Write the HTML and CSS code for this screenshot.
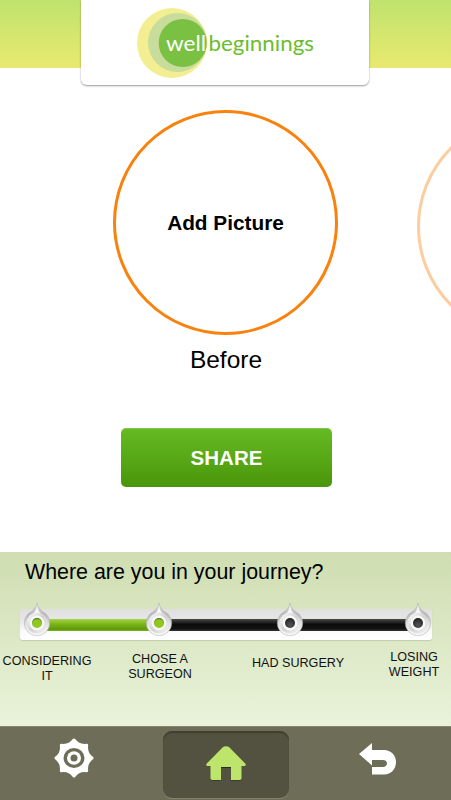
FILE: index.html
```html
<!DOCTYPE html>
<html lang="en">
<head>
<meta charset="utf-8">
<title>Well Beginnings</title>
<link rel="stylesheet" href="styles.css">
</head>
<body>
<div class="app">
  <svg class="defs" width="0" height="0" aria-hidden="true">
    <defs>
      <linearGradient id="knobBody" x1="0" y1="0" x2="0" y2="1">
        <stop offset="0" stop-color="#e8e8e8"/>
        <stop offset="0.35" stop-color="#b8b8b8"/>
        <stop offset="0.7" stop-color="#e8e8e8"/>
        <stop offset="1" stop-color="#fcfcfc"/>
      </linearGradient>
      <linearGradient id="knobFace" x1="0" y1="0" x2="1" y2="1">
        <stop offset="0" stop-color="#fdfdfd"/>
        <stop offset="0.5" stop-color="#d2d2d2"/>
        <stop offset="1" stop-color="#f6f6f6"/>
      </linearGradient>
      <symbol id="knob" viewBox="0 0 28 34">
        <path d="M14 1 C14.500 5 17 8 23 12 A12.700 12.700 0 1 1 5 12 C11 8 13.500 5 14 1 Z" fill="url(#knobBody)" stroke="#a8a8a8" stroke-width=".5"/>
        <path d="M14 3 C14.400 7 15.500 9.500 18 11.500 L14 14 L10 11.500 C12.500 9.500 13.600 7 14 3 Z" fill="#f8f8f8"/>
        <circle cx="14" cy="21" r="10.500" fill="url(#knobFace)"/>
        <circle cx="14" cy="21" r="7.500" fill="#f7f7f7"/>
      </symbol>
    </defs>
  </svg>

  <header class="top">
    <div class="logo-card">
      <svg class="logo" width="288" height="85" viewBox="81 0 288 85" role="img" aria-label="well beginnings">
        <circle cx="172" cy="43" r="35" fill="#f3ee91"/>
        <circle cx="177.500" cy="42.500" r="29.500" fill="#c8dd9c"/>
        <circle cx="182.700" cy="43" r="24" fill="#7ac143"/>
        <text class="logo-well" x="166" y="50.500" textLength="40" lengthAdjust="spacingAndGlyphs">well</text>
        <text class="logo-begin" x="208.500" y="50.500" textLength="105.500" lengthAdjust="spacingAndGlyphs">beginnings</text>
      </svg>
    </div>
  </header>

  <main class="main">
    <div class="carousel">
      <section class="slide">
        <div class="photo"><span class="photo-label">Add Picture</span></div>
        <div class="slide-caption">Before</div>
      </section>
      <section class="slide slide-faded">
        <div class="photo"></div>
      </section>
    </div>
    <button class="share" type="button">SHARE</button>
  </main>

  <section class="journey">
    <h2 class="journey-title">Where are you in your journey?</h2>
    <div class="track">
      <div class="bar"><div class="bar-done"></div></div>
      <span class="knob knob-1"><svg width="28" height="34"><use href="#knob"/></svg><i class="dot dot-on"></i></span>
      <span class="knob knob-2"><svg width="28" height="34"><use href="#knob"/></svg><i class="dot dot-on"></i></span>
      <span class="knob knob-3"><svg width="28" height="34"><use href="#knob"/></svg><i class="dot"></i></span>
      <span class="knob knob-4"><svg width="28" height="34"><use href="#knob"/></svg><i class="dot"></i></span>
    </div>
    <div class="stages">
      <div class="stage stage-1">CONSIDERING<br>IT</div>
      <div class="stage stage-2">CHOSE A<br>SURGEON</div>
      <div class="stage stage-3">HAD SURGERY</div>
      <div class="stage stage-4">LOSING<br>WEIGHT</div>
    </div>
  </section>

  <nav class="nav">
    <button class="nav-btn nav-gear" type="button" aria-label="Settings">
      <svg width="42" height="38" viewBox="0 0 42 38">
        <path fill="#fff" stroke="#fff" stroke-width="3" stroke-linejoin="round" d="M21 1 Q25.800 7.500 33.700 6.300 Q32.500 14.200 39 19 Q32.500 23.800 33.700 31.700 Q25.800 30.500 21 37 Q16.200 30.500 8.300 31.700 Q9.500 23.800 3 19 Q9.500 14.200 8.300 6.300 Q16.200 7.500 21 1 Z"/>
        <ellipse cx="21" cy="19" rx="10.500" ry="10" fill="#6e6d58"/>
        <ellipse cx="21" cy="19" rx="7" ry="6.700" fill="#fff"/>
        <circle cx="21" cy="19" r="3.500" fill="#6e6d58"/>
      </svg>
    </button>
    <button class="nav-btn nav-home" type="button" aria-label="Home">
      <svg width="40" height="35" viewBox="0 0 40 35">
        <path fill="#2c2b20" d="M14 20 H26 V22 H14 Z"/>
        <path fill="#3c3b2c" d="M5 33 C5 34.500 6 35 7 35 H14 V34 H5 Z M25 34 H35 C35 34.500 34 35 33 35 H25 Z"/>
        <path fill="#bde56b" d="M16.500 1.500 C18.500 -.3 21.500 -.3 23.500 1.500 L39.200 17.500 C40.400 18.800 39.600 20 38 20 L35.500 20 L35.500 32 C35.500 33.200 34.500 34 33.500 34 L25 34 L25 21 L15 21 L15 34 L6.500 34 C5.500 34 4.500 33.200 4.500 32 L4.500 20 L2 20 C.4 20 -.4 18.800 .8 17.500 Z"/>
      </svg>
    </button>
    <button class="nav-btn nav-back" type="button" aria-label="Back">
      <svg width="37" height="32" viewBox="0 0 37 32">
        <path fill="#fff" d="M0 11 L13 0 L13 7 L25 7 C32 7 37 12 37 19 C37 26 32 31.500 25 31.500 L13 31.500 L13 24 L24 24 C26.500 24 28 22 28 20.500 C28 18.500 26.500 17 24 17 L13 17 L13 22.500 Z"/>
      </svg>
    </button>
  </nav>
</div>
</body>
</html>
```
FILE: styles.css
```css
* { box-sizing: border-box; }
html, body { margin: 0; padding: 0; }
body {
  width: 451px;
  height: 800px;
  overflow: hidden;
  background: #fff;
  font-family: "Liberation Sans", Arial, sans-serif;
  color: #000;
}
.app {
  width: 451px;
  height: 800px;
  display: flex;
  flex-direction: column;
  overflow: hidden;
}
.defs { position: absolute; }

/* Header */
.top {
  height: 68px;
  flex: none;
  background: linear-gradient(#bfe36d, #e9e96f);
  display: flex;
  justify-content: center;
  padding-right: 1px;
}
.logo-card {
  width: 288px;
  height: 85px;
  flex: none;
  background: #fff;
  border-radius: 0 0 6px 6px;
  box-shadow: 0 1px 2px rgba(0, 0, 0, .4);
}
.logo { display: block; }
.logo-well, .logo-begin {
  font-family: Lato, "Open Sans", sans-serif;
  font-size: 21px;
  font-weight: 400;
}
.logo-well { fill: #fff; }
.logo-begin { fill: #6cbc2d; }

/* Main */
.main {
  flex: 1;
  min-height: 0;
  display: flex;
  flex-direction: column;
  align-items: center;
  padding-top: 42px;
}
.carousel {
  width: 451px;
  display: flex;
  gap: 79px;
  padding-left: 113px;
  overflow: hidden;
  align-items: flex-start;
}
.slide {
  flex: none;
  width: 225px;
  display: flex;
  flex-direction: column;
  align-items: center;
}
.slide-faded { opacity: .4; padding-top: 4px; }
.photo {
  width: 225px;
  height: 225px;
  border: 3px solid #f9820f;
  border-radius: 50%;
  display: flex;
  align-items: center;
  justify-content: center;
  padding-top: 1px;
}
.photo-label { font-size: 20.800px; font-weight: 700; }
.slide-caption { font-size: 24.500px; line-height: 28px; margin-top: 11px; padding-left: 1px; }
.share {
  width: 211px;
  height: 59px;
  margin-top: 54px;
  margin-left: 2px;
  border: 0;
  border-radius: 5px;
  background: linear-gradient(#65bb23, #4a960a);
  color: #fff;
  font-family: inherit;
  font-size: 20.500px;
  font-weight: 700;
  box-shadow: inset 0 1px 0 rgba(255, 255, 255, .2);
}

/* Journey */
.journey {
  height: 174px;
  flex: none;
  background: linear-gradient(#cfddb1, #e9f3da);
  padding-top: 8px;
}
.journey-title {
  margin: 0 0 0 25px;
  font-size: 21.400px;
  line-height: 24px;
  font-weight: 400;
}
.track {
  position: relative;
  width: 412px;
  height: 31px;
  margin: 25px 0 0 20px;
  border-radius: 3px;
  background: linear-gradient(#e0e0e0 0, #e6e6e6 35%, #fafafa 70%, #fff 100%);
  box-shadow: 0 1px 1px rgba(0, 0, 0, .12);
}
.bar {
  position: absolute;
  left: 17px;
  right: 14px;
  top: 10px;
  height: 12px;
  background: linear-gradient(#4a4a4a, #0c0c0c 45%, #111 80%, #333);
}
.bar-done {
  width: 122px;
  height: 100%;
  background: linear-gradient(#a6d44a, #7db61a 40%, #5d9a08 85%, #7fae2e);
}
.knob {
  position: absolute;
  top: -7px;
  width: 28px;
  height: 34px;
}
.knob svg { display: block; }
.knob-1 { left: 3px; }
.knob-2 { left: 125px; }
.knob-3 { left: 256px; }
.knob-4 { left: 384px; }
.dot {
  position: absolute;
  left: 9px;
  top: 16px;
  width: 10px;
  height: 10px;
  border-radius: 50%;
  background: radial-gradient(circle at 50% 70%, #555, #141414);
}
.dot-on {
  background: radial-gradient(circle at 50% 60%, #8fc81f 55%, #3f6310 75%);
}
.stages {
  display: grid;
  grid-template-columns: 94px 132px 144px 81px;
  font-size: 12.600px;
  line-height: 15px;
  text-align: center;
  color: #111;
}
.stage { white-space: nowrap; }
.stage-1 { margin-top: 14px; }
.stage-2 { margin-top: 12px; }
.stage-3 { margin-top: 16px; }
.stage-4 { margin-top: 10px; padding-left: 7px; }

/* Nav */
.nav {
  height: 74px;
  flex: none;
  background: #6e6d58;
  border-top: 1px solid #858570;
  display: grid;
  grid-template-columns: 148px 155px 148px;
  align-items: center;
  justify-items: center;
}
.nav-btn {
  border: 0;
  background: none;
  padding: 0;
  display: flex;
  align-items: center;
  justify-content: center;
}
.nav-btn svg { display: block; overflow: visible; }
.nav-gear { margin-bottom: 11px; }
.nav-back { margin-bottom: 10px; }
.nav-home {
  width: 126px;
  height: 67px;
  margin-top: 1px;
  padding-bottom: 2px;
  border-radius: 9px;
  background: #535240;
  box-shadow: inset 0 2px 1px #403f30, 0 1px 0 #85846f;
}
```
